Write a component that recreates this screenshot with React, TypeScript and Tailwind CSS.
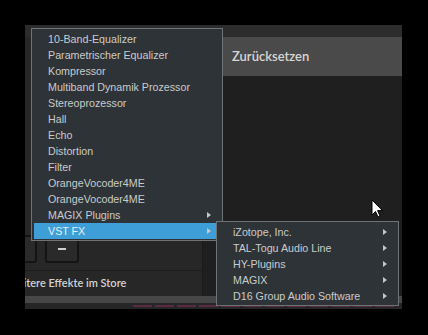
import React from "react";

const mainItems = [
  "10-Band-Equalizer",
  "Parametrischer Equalizer",
  "Kompressor",
  "Multiband Dynamik Prozessor",
  "Stereoprozessor",
  "Hall",
  "Echo",
  "Distortion",
  "Filter",
  "OrangeVocoder4ME",
  "OrangeVocoder4ME",
];

const subItems = [
  "iZotope, Inc.",
  "TAL-Togu Audio Line",
  "HY-Plugins",
  "MAGIX",
  "D16 Group Audio Software",
];

function Arrow() {
  return (
    <svg width="4" height="6" viewBox="0 0 4 6" className="shrink-0">
      <path d="M0 0 L4 3 L0 6 Z" fill="#c4c6c8" />
    </svg>
  );
}

function Row({ label, arrow, active }: { label: string; arrow?: boolean; active?: boolean }) {
  return (
    <div
      className={`flex h-[16px] items-center justify-between pl-[14px] pr-[9px] ${
        active ? "bg-[#3e9fd8] text-[#e6eef3]" : "text-[#c9cbcc]"
      }`}
    >
      <span className="leading-none">{label}</span>
      {arrow ? <Arrow /> : null}
    </div>
  );
}

export default function App() {
  const segs = Array.from({ length: 12 });
  return (
    <div
      className="relative h-[335px] w-[428px] overflow-hidden bg-black"
      style={{ fontFamily: "'Liberation Sans', Arial, sans-serif" }}
    >
      <div className="pl-[25px] pt-[25px]">
        <div className="flex h-[284px] w-[377px] flex-col bg-[#1f1f1f]">
          <div className="h-[12px] bg-[#2c2c2c]" />
          <div className="flex flex-1">
            <div className="flex w-[177px] flex-col justify-end overflow-hidden bg-[#272727]">
              <div className="ml-[-22px] flex gap-[8px] pb-[7px]">
                <div className="h-[28px] w-[34px] rounded-[3px] border-2 border-[#141414] bg-[#2a2a2a]" />
                <div className="flex h-[28px] w-[34px] items-center justify-center rounded-[3px] border-2 border-[#141414] bg-[#2a2a2a]">
                  <div className="h-[2px] w-[8px] bg-[#d0d0d0]" />
                </div>
              </div>
              <div className="flex h-[26px] items-center border-t border-[#1c1c1c]">
                <span
                  className="ml-[-16px] whitespace-nowrap text-[11px] font-semibold text-[#d2d2d2]"
                  style={{ fontFamily: "Lato, 'Open Sans', sans-serif" }}
                >
                  weitere Effekte im Store
                </span>
              </div>
            </div>
            <div className="flex flex-1 flex-col border-l border-[#1a1a1a]">
              <div className="flex h-[39px] items-center bg-[#4a4a4a] pl-[29px]">
                <span
                  className="text-[13px] font-semibold text-[#d6d6d6]"
                  style={{ fontFamily: "Lato, 'Open Sans', sans-serif" }}
                >
                  Zurücksetzen
                </span>
              </div>
              <div className="flex-1 bg-[#1f1f1f]" />
            </div>
          </div>
          <div className="h-[7px] bg-[#474747]" />
          <div className="flex h-[6px] items-center gap-[3px] bg-[#262626] pl-[108px]">
            {segs.map((_, i) => (
              <div key={i} className="h-[2px] w-[19px] bg-[#5a2b40]" />
            ))}
          </div>
        </div>
      </div>

      {/* main context menu */}
      <div className="absolute left-[31px] top-[28px] w-[192px] border border-[#6f7376] bg-[#2e3337] px-[2px] pb-[1px] pt-[2px] text-[10.7px]">
        {mainItems.map((t, i) => (
          <Row key={i} label={t} />
        ))}
        <Row label="MAGIX Plugins" arrow />
        <Row label="VST FX" arrow active />
      </div>

      {/* submenu */}
      <div className="absolute left-[216px] top-[221px] w-[183px] border border-[#6f7376] bg-[#2e3337] px-[2px] pb-[1px] pt-[2px] text-[10.7px]">
        {subItems.map((t, i) => (
          <Row key={i} label={t} arrow />
        ))}
      </div>

      {/* mouse cursor */}
      <svg className="absolute left-[371px] top-[199px]" width="13" height="20" viewBox="0 0 13 20">
        <path d="M1 1 L1 16 L4.5 12.5 L7 18 L9 17 L6.6 11.6 L11.5 11.6 Z" fill="#ffffff" stroke="#000000" strokeWidth="1" />
      </svg>
    </div>
  );
}
